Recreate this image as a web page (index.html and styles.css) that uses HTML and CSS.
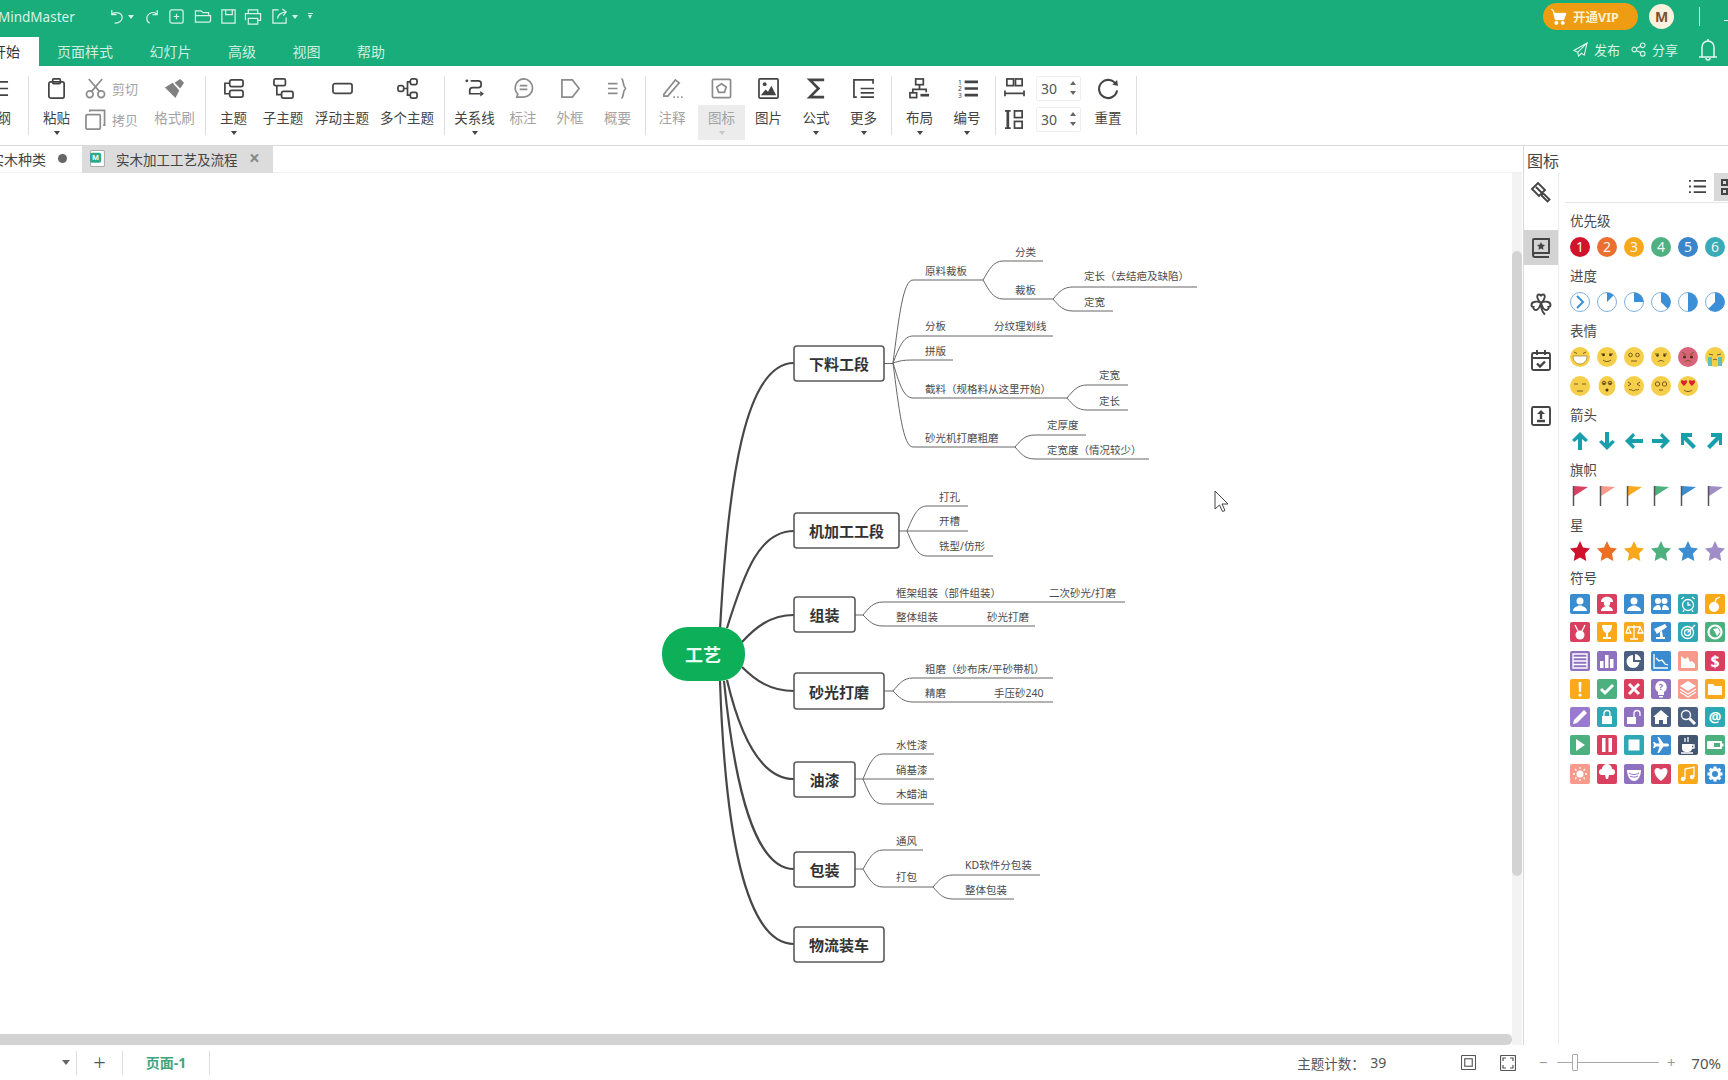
FILE: index.html
```html
<!DOCTYPE html>
<html lang="zh">
<head>
<meta charset="utf-8">
<title>MindMaster</title>
<link rel="stylesheet" href="styles.css">
</head>
<body>
<div class="app">
  <header class="topbar">
    <div class="toprow">
      <div class="appname">MindMaster</div>
      <div class="qa">
        <svg class="qi" viewBox="0 0 18 18"><path d="M4 2v5h5M4 7c2-3 11-3 11 3 0 4-4 6-8 6"/></svg>
        <i class="tri-w"></i>
        <svg class="qi" viewBox="0 0 18 18"><path d="M14 2v5H9M14 7c-1.500-2-4-2.500-6-2-3 1-5 3-5 6 0 2 1 4 3 5"/></svg>
        <svg class="qi" viewBox="0 0 18 18"><rect x="2" y="2" width="14" height="14" rx="2"/><path d="M9 6v6M6 9h6"/></svg>
        <svg class="qi wide" viewBox="0 0 18 18"><path d="M1 15V3h6l2 2h6v3M1 15V8h16v5a2 2 0 0 1-2 2z"/></svg>
        <svg class="qi" viewBox="0 0 18 18"><path d="M2 2h14v14H2zM6 2v5h7V2"/></svg>
        <svg class="qi wide" viewBox="0 0 18 18"><path d="M4 6V2h10v4M1 13V6h16v7h-3M4 11h10v6H4z"/></svg>
        <svg class="qi" viewBox="0 0 18 18"><path d="M8 2H2v14h14v-6M7 11c0-4 3-6 9-7M12 1l4 3-3 4"/></svg>
        <i class="tri-w"></i>
        <i class="tri-w bar"></i>
      </div>
      <div class="topright">
        <div class="vip">
          <svg class="cart" viewBox="0 0 16 16"><path d="M1 1l2 1 1 3h11l-2 6H5L3 3" fill="#fff"/><circle cx="6" cy="14" r="1.500" fill="#fff"/><circle cx="12" cy="14" r="1.500" fill="#fff"/></svg>
          <span>开通VIP</span>
        </div>
        <div class="avatar">M</div>
        <div class="topsep"></div>
        <div class="minline"></div>
      </div>
    </div>
    <div class="toprow tabsrow">
      <nav class="tabs">
        <div class="tab active"><span>开始</span></div>
        <div class="tab">页面样式</div>
        <div class="tab">幻灯片</div>
        <div class="tab">高级</div>
        <div class="tab">视图</div>
        <div class="tab">帮助</div>
      </nav>
      <div class="actions">
        <svg class="ai send" viewBox="0 0 16 16"><path d="M15 1L1 9l4 2zM15 1L5 11l1 4 3-3 3 2z"/></svg>
        <span class="atext">发布</span>
        <svg class="ai share" viewBox="0 0 16 16"><circle cx="3.500" cy="8" r="2.500"/><circle cx="12.500" cy="3.500" r="2.500"/><circle cx="12.500" cy="12.500" r="2.500"/><path d="M5.700 7l4.600-2.500M5.700 9l4.600 2.500"/></svg>
        <span class="atext">分享</span>
        <svg class="bell" viewBox="0 0 20 24"><path d="M1 19h18M4 19V9a6 6 0 0 1 12 0v10M10 1v2M8 20a2 2 0 0 0 4 0"/></svg>
        <div class="edgecircle"></div>
      </div>
    </div>
  </header>

  <section class="ribbon">
    <div class="tool t28 outline">
      <svg class="ico outico" viewBox="0 0 22 22"><path d="M0 4h21M0 11h21M0 18h21"/></svg>
      <div class="foot"><div class="lab outlab">大纲</div></div>
    </div>
    <div class="sep"></div>

    <div class="tool t55">
      <svg class="ico" viewBox="0 0 22 22"><rect x="3" y="4" width="16" height="17" rx="2"/><rect x="7" y="1" width="8" height="5" rx="1"/></svg>
      <div class="foot"><div class="lab">粘贴</div><i class="caret"></i></div>
    </div>
    <div class="pair">
      <div class="pairrow">
        <svg class="ico dim" viewBox="0 0 22 22"><circle cx="5" cy="17" r="3.500"/><circle cx="17" cy="17" r="3.500"/><path d="M7 14L18 1M15 14L4 1"/></svg>
        <span class="lab off">剪切</span>
      </div>
      <div class="pairrow">
        <svg class="ico dim" viewBox="0 0 22 22"><rect x="1" y="6" width="15" height="15" rx="1"/><path d="M5 3V1.500h15.500V17H19"/></svg>
        <span class="lab off">拷贝</span>
      </div>
    </div>
    <div class="tool t61">
      <svg class="ico dim" viewBox="0 0 22 22"><path class="solid" d="M1 10l8-5 7 8-4 8z"/><path class="solid" d="M11 5l6-4 4 4-4 6z"/></svg>
      <div class="foot"><div class="lab off">格式刷</div></div>
    </div>
    <div class="sep"></div>

    <div class="tool t55">
      <svg class="ico" viewBox="0 0 22 22"><rect x="7" y="2" width="14" height="7" rx="2"/><rect x="7" y="13" width="14" height="7" rx="2"/><path d="M7 5.500H2v11h5"/></svg>
      <div class="foot"><div class="lab">主题</div><i class="caret"></i></div>
    </div>
    <div class="tool t44">
      <svg class="ico" viewBox="0 0 22 22"><rect x="1" y="1" width="12" height="7" rx="1.500"/><rect x="9" y="14" width="12" height="7" rx="2"/><path d="M4 8v9.500h5"/></svg>
      <div class="foot"><div class="lab">子主题</div></div>
    </div>
    <div class="tool t74">
      <svg class="ico" viewBox="0 0 22 22"><rect x="1" y="6" width="20" height="10" rx="2"/></svg>
      <div class="foot"><div class="lab">浮动主题</div></div>
    </div>
    <div class="tool t56">
      <svg class="ico" viewBox="0 0 22 22"><rect x="1" y="8" width="6" height="6" rx="2"/><rect x="14" y="1" width="7" height="6" rx="2"/><rect x="14" y="15" width="7" height="6" rx="2"/><path d="M7 11h4V4h3M11 11v7h3"/></svg>
      <div class="foot"><div class="lab">多个主题</div></div>
    </div>
    <div class="gap9"></div>
    <div class="sep"></div>

    <div class="tool t59">
      <svg class="ico" viewBox="0 0 22 22"><circle class="solid" cx="3" cy="3" r="1.500"/><path d="M7 3h8a3 3 0 0 1 3 3v1a3 3 0 0 1-3 3H9a3 3 0 0 0-3 3v3.500h11"/><path class="solid" d="M17 13.500l4 3-4 3z"/></svg>
      <div class="foot"><div class="lab">关系线</div><i class="caret"></i></div>
    </div>
    <div class="tool t38">
      <svg class="ico dim" viewBox="0 0 22 22"><path d="M11 1a9.500 9.500 0 0 1 0 19H4l1-3a9.500 9.500 0 0 1 6-16zM7 8h8M7 12h8"/></svg>
      <div class="foot"><div class="lab off">标注</div></div>
    </div>
    <div class="tool t56">
      <svg class="ico dim" viewBox="0 0 22 22"><path d="M2 2h11l7 9-7 9H2z"/></svg>
      <div class="foot"><div class="lab off">外框</div></div>
    </div>
    <div class="tool t39">
      <svg class="ico dim" viewBox="0 0 22 22"><path d="M1 6h10M1 11h10M1 16h10M15 1c3 0 1 9 5 10-4 1-2 10-5 10"/></svg>
      <div class="foot"><div class="lab off">概要</div></div>
    </div>
    <div class="gap8"></div>
    <div class="sep"></div>

    <div class="tool t52">
      <svg class="ico dim" viewBox="0 0 22 22"><path d="M2 17L14 2l4 3L6 19H2zM12 20h1.500M16 20h1.500M20 20h1.500"/></svg>
      <div class="foot"><div class="lab off">注释</div></div>
    </div>
    <div class="tool t47 active">
      <svg class="ico dim" viewBox="0 0 22 22"><rect x="1.500" y="1.500" width="19" height="19" rx="1"/><path d="M11 6l5 3.500-2 5.500H8L6 9.500z"/></svg>
      <div class="foot"><div class="lab off">图标</div><i class="caret faint"></i></div>
    </div>
    <div class="tool t47">
      <svg class="ico" viewBox="0 0 22 22"><rect x="1" y="1" width="20" height="20" rx="1"/><circle class="solid" cx="7" cy="6.500" r="2"/><path class="solid" d="M3 18l5-6 2.500 2.500L14 8l5 10z"/></svg>
      <div class="foot"><div class="lab">图片</div></div>
    </div>
    <div class="tool t48">
      <svg class="ico" viewBox="0 0 22 22"><path class="thick" d="M19 2H4l9 9-9 9h15"/></svg>
      <div class="foot"><div class="lab">公式</div><i class="caret"></i></div>
    </div>
    <div class="tool t47">
      <svg class="ico" viewBox="0 0 22 22"><path d="M21 6V2H1v18h3M8 11h14M8 15.500h14M8 20h14"/></svg>
      <div class="foot"><div class="lab">更多</div><i class="caret"></i></div>
    </div>
    <div class="gap4"></div>
    <div class="sep"></div>
    <div class="gap4"></div>

    <div class="tool t47">
      <svg class="ico" viewBox="0 0 22 22"><rect x="7" y="1" width="8" height="6"/><path d="M11 7v5M4 16v-4h14v3"/><rect x="1" y="15.500" width="7" height="5"/><path class="thick" d="M12 18h9"/></svg>
      <div class="foot"><div class="lab">布局</div><i class="caret"></i></div>
    </div>
    <div class="tool t48">
      <svg class="ico" viewBox="0 0 22 22"><text class="nums" x="3" y="7">1</text><text class="nums" x="3" y="14">2</text><text class="nums" x="3" y="21">3</text><path class="thick" d="M8 4h14M8 11h14M8 18h14"/></svg>
      <div class="foot"><div class="lab">编号</div><i class="caret"></i></div>
    </div>
    <div class="gap4"></div>
    <div class="sep"></div>

    <div class="spacing">
      <div class="sprow">
        <svg class="ico" viewBox="0 0 22 22"><rect x="3" y="1" width="7" height="7"/><rect x="12" y="1" width="7" height="7"/><path d="M1 13v6M21 13v6M1 16h20"/></svg>
        <div class="num"><span>30</span><div class="spin"><i class="up"></i><i class="down"></i></div></div>
      </div>
      <div class="sprow">
        <svg class="ico" viewBox="0 0 22 22"><path class="thick" d="M4 2v18"/><path d="M1 2h6M1 20h6"/><rect x="11" y="2" width="8" height="7"/><rect x="11" y="13" width="8" height="7"/></svg>
        <div class="num"><span>30</span><div class="spin"><i class="up"></i><i class="down"></i></div></div>
      </div>
    </div>
    <div class="tool t56">
      <svg class="ico" viewBox="0 0 22 22"><path class="thickish" d="M19 7a9.500 9.500 0 1 0 1 6"/><path class="solid" d="M15 7l5-5 1 6z"/></svg>
      <div class="foot"><div class="lab">重置</div></div>
    </div>
    <div class="sep"></div>
  </section>

  <div class="workbody">
    <div class="leftcol">
      <div class="docbar">
        <div class="doc first"><span class="doctitle">实木种类</span><i class="dot"></i></div>
        <div class="doc current">
          <svg class="docicon" viewBox="0 0 16 16"><rect x="1.500" y=".5" width="13" height="15" rx="1" fill="#fff" stroke="#aaa"/><rect x="1" y="2.500" width="10.500" height="9.500" rx="2" fill="#2aa98b"/><text class="docmark" x="6.200" y="9.700">M</text></svg>
          <span class="doctitle">实木加工工艺及流程</span>
          <span class="close">×</span>
        </div>
      </div>
      <div class="canvasrow">
        <div class="canvasarea">
          <svg class="map" viewBox="0 173 1512 861">
            <g class="main-lines">
              <path d="M720 630C728 480 745 363 794 363"/>
              <path d="M727 628C745 570 760 531 794 531"/>
              <path d="M742 642C755 628 770 615 794 615"/>
              <path d="M742 667C755 680 770 691 794 691"/>
              <path d="M727 680C740 735 760 779 794 779"/>
              <path d="M724 681C735 790 755 869 794 869"/>
              <path d="M720 681C725 830 745 944 794 944"/>
            </g>
            <g class="sub-lines">
              <path d="M884 363.500H893"/>
              <path d="M893 363C899 317 903 280 913 280H983"/>
              <path d="M893 363C899 348 903 336 913 336H1053"/>
              <path d="M893 363C899 361 903 360 913 360H953"/>
              <path d="M893 363C899 382 903 398 913 398H1067"/>
              <path d="M893 363C899 409 903 447 913 447H1015"/>
              <path d="M983 280C989 270 993 261 1003 261H1043"/>
              <path d="M983 280C989 290 993 299 1003 299H1053"/>
              <path d="M1053 299C1059 292 1063 287 1073 287H1197"/>
              <path d="M1053 299C1059 306 1063 311 1073 311H1113"/>
              <path d="M1067 398C1073 391 1077 385 1087 385H1128"/>
              <path d="M1067 398C1073 405 1077 410 1087 410H1128"/>
              <path d="M1015 447C1021 440 1025 435 1035 435H1086"/>
              <path d="M1015 447C1021 454 1025 459 1035 459H1149"/>
              <path d="M899 531H968"/>
              <path d="M907 531C913 517 917 506 927 506H968"/>
              <path d="M907 531C913 545 917 556 927 556H993"/>
              <path d="M855 615H863"/>
              <path d="M863 615C869 608 873 602 883 602H1125"/>
              <path d="M863 615C869 621 873 626 883 626H1035"/>
              <path d="M884 691H893"/>
              <path d="M893 691C899 684 903 678 913 678H1053"/>
              <path d="M893 691C899 697 903 702 913 702H1053"/>
              <path d="M855 779H934"/>
              <path d="M863 779C869 765 873 754 883 754H934"/>
              <path d="M863 779C869 793 873 804 883 804H934"/>
              <path d="M855 869H863"/>
              <path d="M863 869C869 859 873 850 883 850H923"/>
              <path d="M863 869C869 879 873 887 883 887H933"/>
              <path d="M933 887C939 880 943 875 953 875H1040"/>
              <path d="M933 887C939 894 943 899 953 899H1014"/>
            </g>
            <rect class="root" x="662" y="627" width="83" height="54" rx="26"/>
            <text class="roottext" x="703" y="654">工艺</text>
            <g class="nodes">
              <rect x="794" y="346" width="90" height="35" rx="3"/>
              <rect x="794" y="513" width="105" height="35" rx="3"/>
              <rect x="794" y="597" width="61" height="35" rx="3"/>
              <rect x="794" y="673" width="90" height="36" rx="3"/>
              <rect x="794" y="762" width="61" height="35" rx="3"/>
              <rect x="794" y="852" width="61" height="35" rx="3"/>
              <rect x="794" y="927" width="90" height="35" rx="3"/>
            </g>
            <g class="nodetext">
              <text x="839" y="363.500">下料工段</text>
              <text x="846.500" y="530.500">机加工工段</text>
              <text x="824.500" y="614.500">组装</text>
              <text x="839" y="691">砂光打磨</text>
              <text x="824.500" y="779.500">油漆</text>
              <text x="824.500" y="869.500">包装</text>
              <text x="839" y="944.500">物流装车</text>
            </g>
            <g class="leaf">
              <text x="925" y="271">原料裁板</text>
              <text x="1015" y="252">分类</text>
              <text x="1015" y="290">裁板</text>
              <text x="1084" y="276">定长（去结疤及缺陷）</text>
              <text x="1084" y="302">定宽</text>
              <text x="925" y="326">分板</text>
              <text x="994" y="326">分纹理划线</text>
              <text x="925" y="351">拼版</text>
              <text x="925" y="389">截料（规格料从这里开始）</text>
              <text x="1099" y="375">定宽</text>
              <text x="1099" y="401">定长</text>
              <text x="925" y="438">砂光机打磨粗磨</text>
              <text x="1047" y="425">定厚度</text>
              <text x="1047" y="450">定宽度（情况较少）</text>
              <text x="939" y="497">打孔</text>
              <text x="939" y="521">开槽</text>
              <text x="939" y="546">铣型/仿形</text>
              <text x="896" y="593">框架组装（部件组装）</text>
              <text x="1049" y="593">二次砂光/打磨</text>
              <text x="896" y="617">整体组装</text>
              <text x="987" y="617">砂光打磨</text>
              <text x="925" y="669">粗磨（纱布床/平砂带机）</text>
              <text x="925" y="693">精磨</text>
              <text x="994" y="693">手压砂240</text>
              <text x="896" y="745">水性漆</text>
              <text x="896" y="770">硝基漆</text>
              <text x="896" y="794">木蜡油</text>
              <text x="896" y="841">通风</text>
              <text x="896" y="877">打包</text>
              <text x="965" y="865">KD软件分包装</text>
              <text x="965" y="890">整体包装</text>
            </g>
            <path class="cursor" d="M1215 491v18l4.500-4 3 6.500 2.500-1-3-6.500h6z"/>
          </svg>
          <div class="hscroll"></div>
        </div>
        <div class="vtrack"><div class="vthumb"></div></div>
      </div>
    </div>

    <aside class="panel">
      <div class="paneltitle">图标</div>
      <div class="panelbody">
        <div class="rail">
          <div class="railitem">
            <svg viewBox="0 0 22 22"><path d="M2 8l6-6 7 7-6 6zM6 6l6 6M12 12.500l2 .5 5.500 5.500-2 2L12 15l-.5-2"/></svg>
          </div>
          <div class="railitem on">
            <svg viewBox="0 0 22 22"><path d="M3 18V3a1 1 0 0 1 1-1h15v14H5a2 2 0 0 0-2 2 2 2 0 0 0 2 2h14"/><path class="solid" d="M11 5l1.200 2.600 2.800.4-2 2 .5 2.800L11 11.500l-2.500 1.300.5-2.800-2-2 2.800-.4z"/></svg>
          </div>
          <div class="railitem">
            <svg viewBox="0 0 22 22"><path d="M11 10C7 7 6 1.500 9 1.500c1 0 2 1 2 2 0-1 1-2 2-2 3 0 2 5.500-2 8.500zM11 10C8 8 1.500 8 1.500 12c0 1 1 2 2 2-.5 1.500 1 3 2.500 3 3 0 4-4 5-7zM11 10c3-2 9.500-2 9.500 2 0 1-1 2-2 2 .5 1.500-1 3-2.500 3-3 0-4-4-5-7zM11 10c0 5 1 9 4 11.500"/></svg>
          </div>
          <div class="railitem">
            <svg viewBox="0 0 22 22"><rect x="2" y="4" width="18" height="17" rx="1.500"/><path d="M2 9h18M7 1v5M15 1v5"/><path class="thick" d="M7 14.500l3 3 5-5"/></svg>
          </div>
          <div class="railitem">
            <svg viewBox="0 0 22 22"><rect x="2" y="2" width="18" height="18" rx="1.500"/><path class="thick" d="M11 14V8M7 16h8"/><path class="solid" d="M11 5l4 4H7z"/></svg>
          </div>
        </div>
        <div class="iconlib">
          <div class="libtop">
            <svg class="listicon" viewBox="0 0 18 18"><path d="M5 3h13M5 9h13M5 15h13M0 3h2M0 9h2M0 15h2"/></svg>
            <div class="gridbtn"><svg class="gridicon" viewBox="0 0 18 18"><rect x="2" y="2" width="5" height="5"/><rect x="2" y="11" width="5" height="5"/><rect x="11" y="2" width="5" height="5"/><rect x="11" y="11" width="5" height="5"/></svg></div>
          </div>
          <div class="libscroll">
            <div class="sec">
              <div class="sectitle">优先级</div>
              <div class="igrid">
                <div class="pri p1">1</div><div class="pri p2">2</div><div class="pri p3">3</div><div class="pri p4">4</div><div class="pri p5">5</div><div class="pri p6">6</div>
              </div>
            </div>
            <div class="sec">
              <div class="sectitle">进度</div>
              <div class="igrid prog">
                <svg viewBox="0 0 20 20"><circle cx="10" cy="10" r="9.500"/><path class="chev" d="M7 4l6 6-6 6"/></svg>
                <svg viewBox="0 0 20 20"><circle cx="10" cy="10" r="9.500"/><path class="pie" d="M10 10V.500A9.500 9.500 0 0 1 16.700 3.300z"/></svg>
                <svg viewBox="0 0 20 20"><circle cx="10" cy="10" r="9.500"/><path class="pie" d="M10 10V.500A9.500 9.500 0 0 1 19.500 10z"/></svg>
                <svg viewBox="0 0 20 20"><circle cx="10" cy="10" r="9.500"/><path class="pie" d="M10 10V.500A9.500 9.500 0 0 1 16.700 16.700z"/></svg>
                <svg viewBox="0 0 20 20"><circle cx="10" cy="10" r="9.500"/><path class="pie" d="M10 .500A9.500 9.500 0 0 1 10 19.500z"/></svg>
                <svg viewBox="0 0 20 20"><circle cx="10" cy="10" r="9.500"/><path class="pie" d="M10 10V.500A9.500 9.500 0 1 1 3.300 16.700z"/></svg>
              </div>
            </div>
            <div class="sec">
              <div class="sectitle">表情</div>
              <div class="igrid face">
                <svg viewBox="0 0 20 20"><circle class="fy" cx="10" cy="10" r="10"/><path class="teeth" d="M3 9h14c0 5-3 8-7 8s-7-3-7-8z"/><path class="fl" d="M4 5l3 1.500M16 5l-3 1.500"/></svg>
                <svg viewBox="0 0 20 20"><circle class="fy" cx="10" cy="10" r="10"/><path class="fl" d="M4 7h4M12 7h4M6 13c2 2 6 2 8 0"/><circle class="fd" cx="6.500" cy="8" r="1.300"/><circle class="fd" cx="13.500" cy="8" r="1.300"/></svg>
                <svg viewBox="0 0 20 20"><circle class="fy" cx="10" cy="10" r="10"/><circle class="fl" cx="6.500" cy="8" r="1.800"/><circle class="fl" cx="13.500" cy="8" r="1.800"/><path class="fl" d="M7 14h6"/></svg>
                <svg viewBox="0 0 20 20"><circle class="fy" cx="10" cy="10" r="10"/><path class="fl" d="M4 7h4M12 7h4M7 15c1-2 5-2 6 0"/><circle class="fd" cx="6.500" cy="8.500" r="1.200"/><circle class="fd" cx="13.500" cy="8.500" r="1.200"/></svg>
                <svg viewBox="0 0 20 20"><circle class="fr" cx="10" cy="10" r="10"/><path class="fl" d="M4 5l4 3M16 5l-4 3M7 15c1-2 5-2 6 0"/><circle class="fd" cx="6.500" cy="10" r="1.500"/><circle class="fd" cx="13.500" cy="10" r="1.500"/></svg>
                <svg viewBox="0 0 20 20"><circle class="fy" cx="10" cy="10" r="10"/><path class="fl" d="M4 7l4 1M16 7l-4 1M8 13c1-1 3-1 4 0"/><path class="tear" d="M3 10h4v9H3zM13 10h4v9h-4z"/></svg>
                <svg viewBox="0 0 20 20"><circle class="fy" cx="10" cy="10" r="10"/><path class="fl" d="M4 8h4M12 8h4M7 15h6"/></svg>
                <svg viewBox="0 0 20 20"><ellipse class="fy" cx="10" cy="10" rx="8.500" ry="10"/><circle class="fl" cx="7" cy="7" r="1.800"/><circle class="fl" cx="13" cy="7" r="1.800"/><circle class="fd" cx="7" cy="7.500" r=".9"/><circle class="fd" cx="13" cy="7.500" r=".9"/><circle class="fd" cx="10" cy="14" r="1.500"/></svg>
                <svg viewBox="0 0 20 20"><circle class="fy" cx="10" cy="10" r="10"/><path class="fl" d="M4 6l3 2-3 2M16 6l-3 2 3 2M5 13c1 2 2 0 3 1s2 1 3 0 2 1 4-1"/></svg>
                <svg viewBox="0 0 20 20"><circle class="fy" cx="10" cy="10" r="10"/><circle class="fl" cx="6.500" cy="8" r="2.200"/><circle class="fl" cx="13.500" cy="8" r="2.200"/><path class="fl" d="M8 14h4"/></svg>
                <svg viewBox="0 0 20 20"><circle class="fy" cx="10" cy="10" r="10"/><path class="fh" d="M6 10C1 6 3 3 6 5c3-2 5 1 0 5zM14 10c-5-4-3-7 0-5 3-2 5 1 0 5z"/><path class="fl" d="M6 14c2 2 6 2 8 0"/></svg>
              </div>
            </div>
            <div class="sec">
              <div class="sectitle">箭头</div>
              <div class="igrid arrows">
                <svg viewBox="0 0 20 20"><path d="M10 1l8 8-2.500 2L12 8v11H8V8l-3.500 3L2 9z"/></svg>
                <svg viewBox="0 0 20 20"><path d="M10 19l8-8-2.500-2L12 12V1H8v11L4.500 9 2 11z"/></svg>
                <svg viewBox="0 0 20 20"><path d="M1 10l8-8 2 2.500L8 8h11v4H8l3 3.500L9 18z"/></svg>
                <svg viewBox="0 0 20 20"><path d="M19 10l-8-8-2 2.500L12 8H1v4h11l-3 3.500 2 2.500z"/></svg>
                <svg viewBox="0 0 20 20"><path d="M3 2h11v4H9l9 9-3 3-9-9v5H3z"/></svg>
                <svg viewBox="0 0 20 20"><path d="M17 2H6v4h5l-9 9 3 3 9-9v5h3z"/></svg>
              </div>
            </div>
            <div class="sec">
              <div class="sectitle">旗帜</div>
              <div class="igrid flags">
                <svg viewBox="0 0 20 20"><path class="c-pink" d="M4 0l14 1-14 9z"/><path class="pole" d="M3.500 0v20"/></svg>
                <svg viewBox="0 0 20 20"><path class="c-salmon" d="M4 0l14 1-14 9z"/><path class="pole" d="M3.500 0v20"/></svg>
                <svg viewBox="0 0 20 20"><path class="c-orange" d="M4 0l14 1-14 9z"/><path class="pole" d="M3.500 0v20"/></svg>
                <svg viewBox="0 0 20 20"><path class="c-green" d="M4 0l14 1-14 9z"/><path class="pole" d="M3.500 0v20"/></svg>
                <svg viewBox="0 0 20 20"><path class="c-blue" d="M4 0l14 1-14 9z"/><path class="pole" d="M3.500 0v20"/></svg>
                <svg viewBox="0 0 20 20"><path class="c-purple" d="M4 0l14 1-14 9z"/><path class="pole" d="M3.500 0v20"/></svg>
              </div>
            </div>
            <div class="sec tight">
              <div class="sectitle">星</div>
              <div class="igrid">
                <svg viewBox="0 0 20 20"><path class="c-red" d="M10 0l3 6.500 7 1-5 5 1.300 7.500L10 16.500 3.700 20 5 12.500l-5-5 7-1z"/></svg>
                <svg viewBox="0 0 20 20"><path class="c-deep" d="M10 0l3 6.500 7 1-5 5 1.300 7.500L10 16.500 3.700 20 5 12.500l-5-5 7-1z"/></svg>
                <svg viewBox="0 0 20 20"><path class="c-orange" d="M10 0l3 6.500 7 1-5 5 1.300 7.500L10 16.500 3.700 20 5 12.500l-5-5 7-1z"/></svg>
                <svg viewBox="0 0 20 20"><path class="c-green" d="M10 0l3 6.500 7 1-5 5 1.300 7.500L10 16.500 3.700 20 5 12.500l-5-5 7-1z"/></svg>
                <svg viewBox="0 0 20 20"><path class="c-blue" d="M10 0l3 6.500 7 1-5 5 1.300 7.500L10 16.500 3.700 20 5 12.500l-5-5 7-1z"/></svg>
                <svg viewBox="0 0 20 20"><path class="c-purple" d="M10 0l3 6.500 7 1-5 5 1.300 7.500L10 16.500 3.700 20 5 12.500l-5-5 7-1z"/></svg>
              </div>
            </div>
            <div class="sec">
              <div class="sectitle">符号</div>
              <div class="igrid syms">
                <svg class="b-blue" viewBox="0 0 20 20"><circle cx="10" cy="7" r="3.500"/><path d="M3 17c0-4 4-4 5.500-5.500h3C13 13 17 13 17 17z"/></svg>
                <svg class="b-pink" viewBox="0 0 20 20"><path d="M4 8c0-7 12-7 12 0z"/><circle cx="10" cy="9" r="3.200"/><path d="M4 17c0-3 3-4 4.500-5h3c1.500 1 4.500 2 4.500 5z"/></svg>
                <svg class="b-blue" viewBox="0 0 20 20"><circle cx="10" cy="7" r="3.500"/><path d="M3 17c0-4 4-4 5.500-5.500h3C13 13 17 13 17 17z"/></svg>
                <svg class="b-blue" viewBox="0 0 20 20"><circle cx="7" cy="7" r="3"/><circle cx="13.500" cy="7" r="3"/><path d="M2 16c0-3 3-4 4-5h2c1 1 2 2 2 5zM11 16c0-3 1-4 1.500-5h2c1 1 3.500 2 3.500 5z"/></svg>
                <svg class="b-teal" viewBox="0 0 20 20"><circle class="ln" cx="10" cy="11" r="5.500"/><path class="ln" d="M10 8v3h2.500M3.500 5L6 3M16.500 5L14 3M6 16l-1 2M14 16l1 2"/></svg>
                <svg class="b-orange" viewBox="0 0 20 20"><circle cx="9" cy="13" r="5"/><path class="ln" d="M10 8l1-3 4-2"/></svg>

                <svg class="b-pink" viewBox="0 0 20 20"><circle cx="10" cy="13" r="4.500"/><path class="ln" d="M5 3l3 6M15 3l-3 6"/></svg>
                <svg class="b-orange" viewBox="0 0 20 20"><path d="M5 3h10c0 5-2 7-4 8v4h3v2H6v-2h3v-4C7 10 5 8 5 3z"/></svg>
                <svg class="b-orange" viewBox="0 0 20 20"><path class="ln" d="M10 3v13M6 17h8M4 5h12M4 5l-2 6h5zM16 5l-2 6h5z"/></svg>
                <svg class="b-blue" viewBox="0 0 20 20"><path d="M3 7l11-5 2 3-10 7z"/><path d="M9 10l2-1 1 6h-3z"/><path d="M5 15h9v2H5z"/></svg>
                <svg class="b-teal" viewBox="0 0 20 20"><circle class="ln" cx="9.500" cy="10.500" r="6"/><circle class="ln" cx="9.500" cy="10.500" r="3"/><path class="ln" d="M9.500 10.500L17 3"/></svg>
                <svg class="b-green" viewBox="0 0 20 20"><circle class="ln thickln" cx="10" cy="10" r="6.500"/><path d="M8 7l5-1 2 4-3 4-2-4z"/></svg>

                <svg class="b-purple" viewBox="0 0 20 20"><path class="ln" d="M3 3h14v14H3zM3 6.500h14M3 10h14M3 13.500h14"/></svg>
                <svg class="b-purple" viewBox="0 0 20 20"><rect x="3" y="10" width="3.500" height="7"/><rect x="8" y="4" width="3.500" height="13"/><rect x="13" y="8" width="3.500" height="9"/></svg>
                <svg class="b-slate" viewBox="0 0 20 20"><path d="M9 4a6.500 6.500 0 1 0 6.500 7H9z"/><path d="M11 3a6.500 6.500 0 0 1 6 6h-6z"/></svg>
                <svg class="b-blue" viewBox="0 0 20 20"><path class="ln" d="M3 3v14h14M5 7l3 3 3-1 3 4 3 1"/></svg>
                <svg class="b-salmon" viewBox="0 0 20 20"><path d="M3 17V5l4 3 3-2 2 5 2-1 3 3v4z"/></svg>
                <svg class="b-pink" viewBox="0 0 20 20"><text class="symtext big" x="10" y="15.500">$</text></svg>

                <svg class="b-orange" viewBox="0 0 20 20"><path d="M8.500 3h3l-.5 10H9z"/><circle cx="10" cy="16" r="1.600"/></svg>
                <svg class="b-green" viewBox="0 0 20 20"><path class="ln thick3" d="M4 10l4 4 8-8"/></svg>
                <svg class="b-pink" viewBox="0 0 20 20"><path class="ln thick3" d="M5 5l10 10M15 5L5 15"/></svg>
                <svg class="b-purple" viewBox="0 0 20 20"><path d="M10 2a6 6 0 0 1 3 11v3H7v-3a6 6 0 0 1 3-11z"/><rect x="8" y="17" width="4" height="1.500"/><text class="symtext qm" x="10" y="11">?</text></svg>
                <svg class="b-salmon" viewBox="0 0 20 20"><path d="M10 2l8 5-8 5-8-5z"/><path class="ln" d="M2 10l8 5 8-5M2 13l8 5 8-5"/></svg>
                <svg class="b-orange" viewBox="0 0 20 20"><path d="M3 5h5l2 2h7v9H3z"/></svg>

                <svg class="b-purple2" viewBox="0 0 20 20"><path d="M3 17l1-4L14 3l3 3L7 16z"/></svg>
                <svg class="b-teal" viewBox="0 0 20 20"><rect x="5" y="9" width="10" height="8"/><path class="ln" d="M7 9V6.500a3 3 0 0 1 6 0V9"/></svg>
                <svg class="b-purple" viewBox="0 0 20 20"><rect x="3" y="10" width="9" height="7"/><path class="ln" d="M10 10V6.500a3 3 0 0 1 6 0V9"/></svg>
                <svg class="b-slate" viewBox="0 0 20 20"><path d="M10 3L2 10h2v7h4v-4h4v4h4v-7h2z"/></svg>
                <svg class="b-slate" viewBox="0 0 20 20"><circle class="ln" cx="8" cy="8" r="4.500"/><path class="ln thick3" d="M11.500 11.500L17 17"/></svg>
                <svg class="b-teal" viewBox="0 0 20 20"><text class="symtext at" x="10" y="15">@</text></svg>

                <svg class="b-green" viewBox="0 0 20 20"><path d="M6 4l9 6-9 6z"/></svg>
                <svg class="b-pink" viewBox="0 0 20 20"><rect x="5" y="3" width="3.500" height="14"/><rect x="11.500" y="3" width="3.500" height="14"/></svg>
                <svg class="b-teal" viewBox="0 0 20 20"><rect x="4.500" y="4.500" width="11" height="11"/></svg>
                <svg class="b-blue" viewBox="0 0 20 20"><path d="M18 10c0-1-1-1.500-2-1.500h-3.500L8 2H6.500l2 6.500H5L3.500 7H2l1 3-1 3h1.500L5 11.500h3.500L6.500 18H8l4.500-6.500H16c1 0 2-.5 2-1.500z"/></svg>
                <svg class="b-slate2" viewBox="0 0 20 20"><path d="M4 9h10v4a4 4 0 0 1-4 4H8a4 4 0 0 1-4-4z"/><path class="ln" d="M14 10h2v3h-2M7 3v4M10 2v5M3 18h12"/></svg>
                <svg class="b-green" viewBox="0 0 20 20"><rect x="2" y="6" width="15" height="8" rx="1"/><rect x="9" y="8" width="6" height="4" class="cutout-green"/><rect x="17" y="8.500" width="1.500" height="3"/></svg>

                <svg class="b-salmon" viewBox="0 0 20 20"><circle cx="10" cy="10" r="3.500"/><path class="ln" d="M10 3v2M10 15v2M3 10h2M15 10h2M5 5l1.500 1.500M15 5l-1.500 1.500M5 15l1.500-1.500M15 15l-1.500-1.500"/></svg>
                <svg class="b-pink" viewBox="0 0 20 20"><path d="M5 11a3 3 0 0 1 0-6 5 5 0 0 1 10 0 3 3 0 0 1 0 6zM8 11h4l-1 4H9z"/></svg>
                <svg class="b-purple" viewBox="0 0 20 20"><path d="M3 6h14c0 6-3 11-7 11S3 12 3 6z"/><path class="ln-purple" d="M5 9c3 2 7 2 10 0M6 12c3 1.500 5 1.500 8 0"/></svg>
                <svg class="b-pink" viewBox="0 0 20 20"><path d="M10 17C2 11 2 4 6.500 4 8 4 9.500 5 10 6c.5-1 2-2 3.500-2C18 4 18 11 10 17z"/></svg>
                <svg class="b-orange" viewBox="0 0 20 20"><path class="ln" d="M7 15V5l9-2v10"/><circle cx="5" cy="15" r="2.200"/><circle cx="14" cy="13" r="2.200"/></svg>
                <svg class="b-blue" viewBox="0 0 20 20"><circle class="ln gear" cx="10" cy="10" r="4.500"/><path class="ln thick3" d="M10 2.500v2M10 15.500v2M2.500 10h2M15.500 10h2M4.700 4.700l1.400 1.400M13.900 13.900l1.400 1.400M15.300 4.700l-1.400 1.400M6.100 13.900l-1.400 1.400"/></svg>
              </div>
            </div>
          </div>
        </div>
      </div>
    </aside>
  </div>

  <footer class="statusbar">
    <div class="pages">
      <div class="pagesel"><i class="caret wider"></i></div>
      <div class="addpage">+</div>
      <div class="pagetab">页面-1</div>
    </div>
    <div class="statusright">
      <span class="count">主题计数：</span>
      <span class="countnum">39</span>
      <svg class="sico fit" viewBox="0 0 16 16"><rect x=".5" y=".5" width="15" height="15" rx="1"/><rect x="4" y="4" width="8" height="8"/></svg>
      <svg class="sico full" viewBox="0 0 16 16"><rect x=".5" y=".5" width="15" height="15" rx="1"/><path d="M3 6V3h3M13 6V3h-3M3 10v3h3M13 10v3h-3"/></svg>
      <span class="zbtn minus">−</span>
      <div class="slider"><div class="thumb"></div></div>
      <span class="zbtn plus">+</span>
      <span class="pct">70%</span>
    </div>
  </footer>
</div>
</body>
</html>
```
FILE: styles.css
```css
* { box-sizing: border-box; }
html, body { margin: 0; padding: 0; }
body {
  width: 1728px; height: 1080px; overflow: hidden; background: #fff;
  font-family: "Noto Sans", "Noto Sans CJK SC", sans-serif; color: #444;
}
.app { display: flex; flex-direction: column; width: 1728px; height: 1080px; overflow: hidden; }

/* top bar */
.topbar { height: 66px; background: #18ad7b; color: #d9f2e8; flex: none; }
.toprow { display: flex; align-items: center; height: 33px; position: relative; }
.appname { width: 105px; margin-left: -2px; padding-top: 1px; font-size: 13.500px; line-height: 33px; flex: none; color: #d9f2e8; }
.qa { display: grid; grid-template-columns: 22px 8px 34px 14px 40px 10px 40px 12px 20px 10px; justify-items: center; align-items: center; margin-left: 2px; }
.qi { width: 17px; height: 17px; fill: none; stroke: #d9f2e8; stroke-width: 1.300; }
.qi.wide { width: 18px; }
.tri-w { width: 0; height: 0; border-left: 3px solid transparent; border-right: 3px solid transparent; border-top: 4px solid #d9f2e8; }
.tri-w.bar { position: relative; border-left-width: 2.500px; border-right-width: 2.500px; }
.tri-w.bar::before { content: ""; position: absolute; left: -2.500px; top: -6px; width: 5px; height: 1px; background: #d9f2e8; }
.topright { margin-left: auto; display: flex; align-items: center; height: 33px; }
.vip { width: 95px; height: 27px; border-radius: 14px; background: #ee9c12; display: flex; align-items: center; padding-left: 7px; color: #fdf0d0; font-size: 12.500px; font-weight: 700; }
.cart { width: 17px; height: 17px; margin-right: 6px; stroke: #fff; stroke-width: .8; }
.avatar { width: 25px; height: 25px; margin-left: 11px; border-radius: 50%; background: #fbf1dd; color: #7a5230; font-size: 14px; font-weight: 700; display: flex; align-items: center; justify-content: center; }
.topsep { width: 1px; height: 19px; background: #c8ecdd; margin-left: 25px; }
.minline { width: 4px; height: 1px; background: #fff; margin-left: 24px; margin-top: 8px; }

.tabsrow { align-items: flex-end; }
.tabs { display: flex; gap: 36.500px; height: 29px; align-items: center; font-size: 14px; color: #cfeee1; }
.tab { line-height: 29px; white-space: nowrap; }
.tab.active { width: 39px; height: 29px; background: #fff; color: #333; margin-right: -18.500px; position: relative; overflow: hidden; }
.tab.active span { display: block; margin-left: -8px; width: 28px; }
.actions { margin-left: auto; height: 33px; align-self: flex-end; display: flex; align-items: center; }
.ai { width: 15px; height: 15px; fill: none; stroke: #d9f2e8; stroke-width: 1.200; }
.atext { font-size: 13px; color: #d9f2e8; margin-left: 6px; white-space: nowrap; }
.share { margin-left: 11px; }
.bell { width: 20px; height: 24px; margin-left: 20px; fill: none; stroke: #e6f7f0; stroke-width: 1.500; }
.edgecircle { width: 8px; height: 14px; border: 2px solid #d9f2e8; border-radius: 50%; margin-left: 10px; margin-right: -8px; }

/* ribbon */
.ribbon { height: 80px; flex: none; display: flex; background: #fff; border-bottom: 1px solid #d9d9d9; }
.sep { width: 1px; height: 59px; margin-top: 10px; background: #dedede; flex: none; }
.gap4 { width: 4px; flex: none; } .gap8 { width: 8px; flex: none; } .gap9 { width: 9px; flex: none; }
.tool { flex: none; display: flex; flex-direction: column; align-items: center; padding-top: 12px; }
.t28 { width: 28px; } .t38 { width: 38px; } .t39 { width: 39px; } .t44 { width: 44px; } .t47 { width: 47px; }
.t48 { width: 48px; } .t52 { width: 52px; } .t55 { width: 55px; } .t56 { width: 56px; } .t59 { width: 59px; }
.t61 { width: 61px; } .t74 { width: 74px; }
.ico { width: 21px; height: 21px; flex: none; fill: none; stroke: #444; stroke-width: 1.800; overflow: visible; }
.ico.dim { stroke: #8c8c8c; }
.ico .solid { fill: #444; stroke: none; }
.ico.dim .solid { fill: #808080; }
.ico .thick { stroke-width: 2.800; }
.ico .thickish { stroke-width: 2.200; }
.nums { font-size: 7px; fill: #444; stroke: none; text-anchor: middle; font-family: "Noto Sans", sans-serif; }
.foot { width: 100%; height: 35px; margin-top: 6px; padding-top: 4px; display: flex; flex-direction: column; align-items: center; }
.tool.active .foot { background: #ececec; }
.lab { font-size: 13.500px; line-height: 18px; color: #444; white-space: nowrap; }
.lab.off { color: #a3a3a3; }
.caret { display: block; width: 0; height: 0; margin-top: 4px; border-left: 3.500px solid transparent; border-right: 3.500px solid transparent; border-top: 4px solid #444; }
.caret.faint { border-top-color: #c8c8c8; }
.outline { align-items: flex-start; overflow: hidden; }
.outico { margin-left: -12px; }
.outlab { margin-left: -16px; }
.foot .outlab { align-self: flex-start; margin-left: -16px; }
.pair { width: 60px; flex: none; padding: 12px 0 0 1px; display: flex; flex-direction: column; gap: 10px; }
.pairrow { display: flex; align-items: center; gap: 6px; height: 21px; }
.pairrow .lab { font-size: 13px; }
.spacing { width: 76px; margin-left: 8px; padding-top: 10px; flex: none; display: flex; flex-direction: column; gap: 7px; }
.sprow { display: flex; align-items: center; gap: 11px; height: 24px; }
.num { width: 45px; height: 25px; border: 1px solid #eee; border-radius: 2px; display: flex; align-items: center; justify-content: space-between; padding: 0 4px; font-size: 14px; color: #555; flex: none; }
.spin { display: flex; flex-direction: column; gap: 6px; }
.spin i { display: block; width: 0; height: 0; border-left: 3.500px solid transparent; border-right: 3.500px solid transparent; }
.spin .up { border-bottom: 4px solid #666; }
.spin .down { border-top: 4px solid #666; }

/* main body */
.workbody { flex: 1; display: flex; min-height: 0; }
.leftcol { width: 1524px; flex: none; display: flex; flex-direction: column; border-right: 1px solid #d9d9d9; }
.docbar { height: 27px; flex: none; display: flex; border-bottom: 1px solid #f1f1f1; }
.doc { height: 27px; display: flex; align-items: center; font-size: 14px; color: #444; white-space: nowrap; padding-bottom: 2px; }
.doc.first { width: 82px; overflow: hidden; }
.doc.first .doctitle { margin-left: -10px; width: 56px; }
.dot { width: 9px; height: 9px; border-radius: 50%; background: #666; margin-left: 12px; flex: none; }
.doc.current { width: 191px; background: #dcdcdc; padding-left: 7px; }
.docicon { width: 17px; height: 17px; flex: none; }
.docmark { font-size: 7px; fill: #fff; font-weight: 700; text-anchor: middle; font-family: "Noto Sans", sans-serif; }
.doc.current .doctitle { margin-left: 10px; width: 124px; font-size: 13.500px; }
.close { margin-left: 9px; font-size: 19px; color: #8a8a8a; line-height: 1; font-weight: 700; }
.canvasrow { flex: 1; display: flex; min-height: 0; }
.canvasarea { width: 1512px; flex: none; display: flex; flex-direction: column; }
.map { width: 1512px; height: 861px; display: block; flex: none; background: #fff; }
.hscroll { height: 11px; flex: none; background: #d3d3d3; border-radius: 0 5px 5px 0; }
.vtrack { width: 10px; flex: none; background: #f3f3f3; }
.vthumb { width: 10px; height: 625px; margin-top: 78px; background: #d3d3d3; border-radius: 5px; }

/* mind map */
.main-lines path { fill: none; stroke: #474747; stroke-width: 2.200; }
.sub-lines path { fill: none; stroke: #666; stroke-width: 1; }
.root { fill: #0db058; }
.roottext { font-size: 18px; font-weight: 700; fill: #eafbf1; text-anchor: middle; dominant-baseline: central; font-family: "Noto Sans CJK SC", sans-serif; }
.nodes rect { fill: #fff; stroke: #5a5a5a; stroke-width: 1.600; }
.nodetext text { font-size: 15px; font-weight: 700; fill: #333; text-anchor: middle; dominant-baseline: central; font-family: "Noto Sans CJK SC", sans-serif; }
.leaf text { font-size: 10.500px; fill: #4a4a4a; dominant-baseline: central; font-family: "Noto Sans", "Noto Sans CJK SC", sans-serif; }
.cursor { fill: #fff; stroke: #444; stroke-width: 1; }

/* right panel */
.panel { flex: 1; min-width: 0; display: flex; flex-direction: column; overflow: hidden; }
.paneltitle { height: 27px; flex: none; padding-left: 3px; font-size: 16px; line-height: 30px; color: #444; }
.panelbody { flex: 1; display: flex; min-height: 0; }
.rail { width: 35px; flex: none; border-right: 1px solid #ececec; display: flex; flex-direction: column; padding-top: 0; }
.railitem { height: 35px; margin-bottom: 21px; display: flex; align-items: center; justify-content: center; }
.railitem svg { width: 22px; height: 22px; fill: none; stroke: #444; stroke-width: 1.900; }
.railitem .solid { fill: #444; stroke: none; }
.railitem .thick { stroke-width: 2.400; }
.railitem.on { background: #d3d3d3; }
.rail .railitem:first-child { margin-top: 1px; }
.iconlib { flex: 1; min-width: 0; }
.libtop { height: 30px; margin-left: 6px; border-bottom: 1px solid #e6e6e6; display: flex; align-items: flex-start; justify-content: flex-end; }
.listicon { width: 17px; height: 17px; margin-top: 5px; fill: none; stroke: #444; stroke-width: 2; }
.gridbtn { width: 14px; height: 28px; margin-left: 8px; background: #d9d9d9; overflow: hidden; flex: none; }
.gridicon { width: 18px; height: 18px; margin: 5px 0 0 6px; fill: none; stroke: #444; stroke-width: 2; display: block; }
.libscroll { padding: 9px 0 0 11px; }
.sec { margin-bottom: 10px; }
.sec.tight { margin-bottom: 8px; }
.sectitle { font-size: 13.500px; line-height: 18px; height: 18px; margin-bottom: 7px; color: #4a4a4a; }
.igrid { display: grid; grid-template-columns: repeat(6, 27px); row-gap: 9px; }
.igrid.syms { row-gap: 8.300px; margin-top: 1px; }
.igrid svg { width: 20px; height: 20px; display: block; }
.pri { width: 20px; height: 20px; border-radius: 50%; color: #f3f3f3; font-size: 14px; line-height: 20px; text-align: center; }
.p1 { background: #d1132c; } .p2 { background: #ec6f30; } .p3 { background: #f8a91b; }
.p4 { background: #50b080; } .p5 { background: #3a85cb; } .p6 { background: #38aab8; }
.prog circle { fill: #fff; stroke: #7fb0dc; stroke-width: 1; }
.prog .pie { fill: #3a8fd6; }
.prog .chev { fill: none; stroke: #3a8fd6; stroke-width: 2; }
.face .fy { fill: #f6cf4a; }
.face .fr { fill: #d8637a; }
.face .fl { fill: none; stroke: #7a5a20; stroke-width: 1; }
.face .fd { fill: #4a3410; }
.face .teeth { fill: #fff; stroke: #9a7a30; stroke-width: .7; }
.face .tear { fill: #62c0b8; }
.face .fh { fill: #d8202e; }
.arrows svg path { fill: #17a0ac; }
.flags .pole { fill: none; stroke: #555; stroke-width: 1.500; }
.c-pink { fill: #dc4060; } .c-salmon { fill: #f79a8c; } .c-orange { fill: #f9a91a; } .c-green { fill: #4cb07f; }
.c-blue { fill: #3b8ed0; } .c-purple { fill: #a08dc8; } .c-red { fill: #d0112b; } .c-deep { fill: #ee6e22; }
.syms svg { fill: #fff; border-radius: 2px; }
.b-blue { background: #3a8cd0; } .b-pink { background: #d9405f; } .b-teal { background: #2fa8b5; }
.b-orange { background: #f9a91a; } .b-purple { background: #8e72c0; } .b-purple2 { background: #9a7ad0; }
.b-green { background: #4cb07f; } .b-slate { background: #4b6080; } .b-slate2 { background: #445570; }
.b-salmon { background: #f79a8c; }
.syms .ln { fill: none; stroke: #fff; stroke-width: 1.300; }
.syms .thickln { stroke-width: 2.200; }
.syms .thick3 { stroke-width: 3; }
.syms .gear { stroke-width: 3; }
.syms .ln-purple { fill: none; stroke: #8e72c0; stroke-width: 1; }
.syms .cutout-green { fill: #4cb07f; }
.symtext { fill: #fff; text-anchor: middle; font-family: "Noto Sans", sans-serif; font-weight: 700; }
.symtext.big { font-size: 16px; }
.symtext.qm { fill: #8e72c0; font-size: 9px; }
.symtext.at { font-size: 14px; }

/* status bar */
.statusbar { height: 35px; flex: none; display: flex; align-items: center; background: #fff; }
.pages { display: flex; align-items: center; height: 24px; }
.pagesel { width: 77px; height: 24px; border-right: 1px solid #ddd; display: flex; align-items: center; justify-content: flex-end; padding-right: 6px; }
.caret.wider { margin: 0; border-left-width: 4px; border-right-width: 4px; border-top-width: 5px; border-top-color: #666; }
.addpage { width: 46px; height: 24px; border-right: 1px solid #ddd; font-size: 22px; line-height: 22px; text-align: center; color: #555; font-weight: 300; }
.pagetab { width: 87px; height: 24px; border-right: 1px solid #ddd; font-size: 14px; line-height: 24px; font-weight: 700; color: #3fa57f; text-align: center; }
.statusright { margin-left: auto; display: flex; align-items: center; padding-right: 7px; }
.count { font-size: 13.500px; color: #555; width: 73px; white-space: nowrap; margin-left: 1px; }
.countnum { font-size: 14px; color: #555; width: 91px; }
.sico { width: 15px; height: 15px; fill: none; stroke: #555; stroke-width: 1.200; flex: none; }
.full { margin-left: 24px; width: 16px; height: 16px; }
.zbtn { font-size: 15px; color: #999; width: 10px; text-align: center; line-height: 1; }
.minus { margin-left: 22px; }
.slider { width: 102px; height: 1px; background: #aaa; margin-left: 9px; position: relative; }
.thumb { position: absolute; left: 15px; top: -8px; width: 6px; height: 17px; background: #fff; border: 1px solid #aaa; border-radius: 1px; }
.plus { margin-left: 7px; }
.pct { font-size: 15px; color: #555; margin-left: 15px; }
```
